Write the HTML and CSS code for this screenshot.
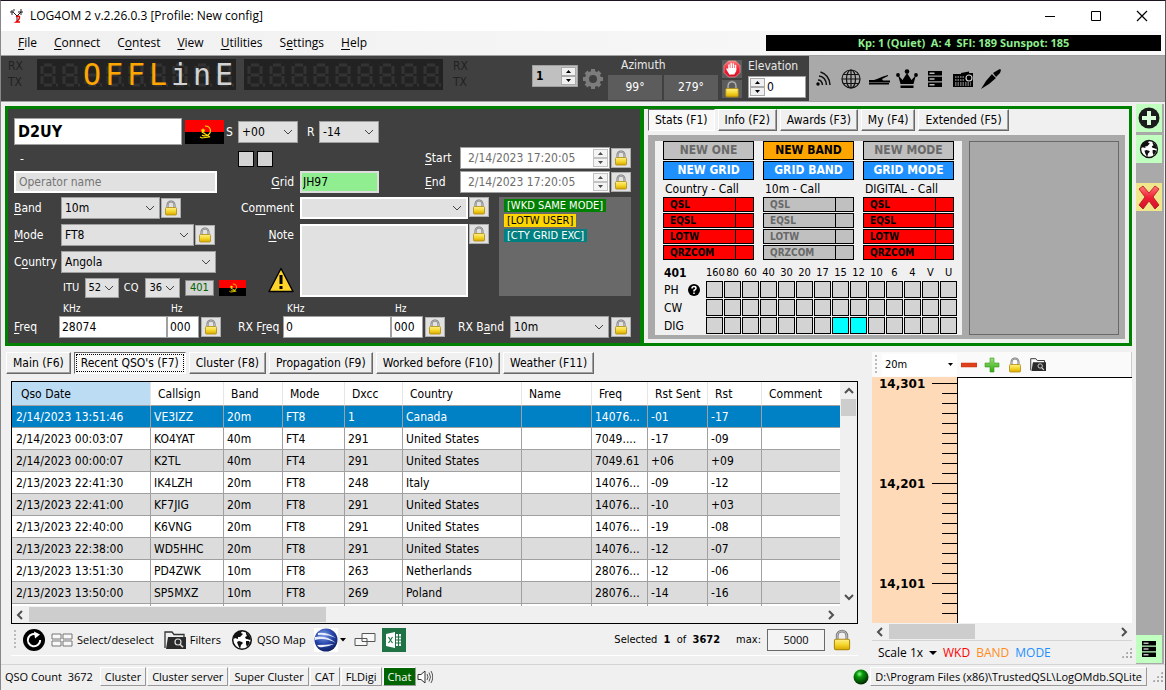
FILE: index.html
```html
<!DOCTYPE html>
<html lang="en">
<head>
    <meta charset="UTF-8">
    <meta name="viewport" content="width=device-width, initial-scale=1.0">
    <title>LOG4OM 2</title>
    <link rel="stylesheet" href="styles.css">
</head>
<body>
    <!-- Shared icons -->
    <svg class="hidden">
        <defs>
            <linearGradient id="gold" x1="0" y1="0" x2="0" y2="1">
                <stop offset="0" stop-color="#fff08a"/><stop offset="0.5" stop-color="#f5d82e"/><stop offset="1" stop-color="#d9a900"/>
            </linearGradient>
            <linearGradient id="redGrad" x1="0" y1="0" x2="0" y2="1">
                <stop offset="0" stop-color="#ff7a7a"/><stop offset="0.5" stop-color="#f02035"/><stop offset="1" stop-color="#d0102a"/>
            </linearGradient>
            <linearGradient id="greenGrad" x1="0" y1="0" x2="0" y2="1">
                <stop offset="0" stop-color="#9be07a"/><stop offset="1" stop-color="#2fa80f"/>
            </linearGradient>
            <radialGradient id="led" cx="0.4" cy="0.3" r="0.7">
                <stop offset="0" stop-color="#8f8"/><stop offset="0.3" stop-color="#0a9a0a"/><stop offset="1" stop-color="#002800"/>
            </radialGradient>
            <radialGradient id="earthGrad" cx="0.4" cy="0.3" r="0.8">
                <stop offset="0" stop-color="#7d9be6"/><stop offset="0.5" stop-color="#2443a8"/><stop offset="1" stop-color="#0a1650"/>
            </radialGradient>
            <pattern id="ghost" width="22" height="31" patternUnits="userSpaceOnUse">
                <g fill="none" stroke="#333" stroke-width="3">
                    <path d="M7 6h8M7 16h8M7 26h8M5 7v8M5 17v8M17 7v8M17 17v8"/>
                    <path d="M19 26h2"/>
                </g>
            </pattern>
        </defs>
        <symbol id="lock" viewBox="0 0 16 16">
            <path d="M4.5 8V5a3.5 3.5 0 0 1 7 0v3" fill="none" stroke="#777" stroke-width="2"/>
            <path d="M4.5 8V5a3.5 3.5 0 0 1 7 0v3" fill="none" stroke="#ccc" stroke-width="0.7"/>
            <rect x="2.5" y="7.5" width="11" height="7.5" rx="1" fill="url(#gold)" stroke="#b08c10" stroke-width="0.8"/>
        </symbol>
        <symbol id="flag" viewBox="0 0 39 24">
            <path d="M0 0h39v12H0z" fill="#f00"/>
            <path d="M0 12h39v12H0z" fill="#000"/>
            <path d="M20 6c6 0 7 6 3 9-2 1.500-5 1-6 0M15 17l2 1 7-1M17 12l8 5" fill="none" stroke="#ffe000" stroke-width="1.200"/>
            <path d="M18 8l.8 1.500 1.700.2-1.200 1.200.3 1.700-1.600-.8-1.500.8.3-1.700-1.300-1.200 1.800-.2z" fill="#ffe000"/>
        </symbol>
        <symbol id="globe" viewBox="0 0 22 22">
            <circle cx="11" cy="11" r="9.300" fill="#fff" stroke="#111" stroke-width="1.500"/>
            <path d="M4 5l4-3 3 0-1 2 2 1-3 3-2 0 0 2-3-1-1 1-1-1zM8 12l3 1 1 1-2 2-1 4-2-4-1-3zM15 3l3 3 2 4-1 1-3-1-1 0-1-2 2-1-1-2zM15 12l3 0 1 2-3 4-1-3z" fill="#111"/>
        </symbol>
        <symbol id="servers" viewBox="0 0 16 18">
            <path d="M1 1h14v4.500H1zM1 6.700h14v4.500H1zM1 12.400h14v4.500H1z" fill="#000"/>
            <path d="M2.500 2.500h5v1.500h-5zM2.500 8.200h5v1.500h-5zM2.500 13.900h5v1.500h-5z" fill="#bbb"/>
        </symbol>
        <symbol id="folder" viewBox="0 0 22 20">
            <path d="M1 18V2h7l2 2.500h10V8" fill="none" stroke="#333" stroke-width="1.300"/>
            <path d="M4 7h18v12H2z" fill="#2b2b2b"/>
            <circle cx="14" cy="12" r="3" fill="none" stroke="#ddd" stroke-width="1.200"/>
            <path d="M16 14.300l3 3" stroke="#ddd" stroke-width="1.600"/>
        </symbol>
    </svg>

    <!-- Title bar -->
    <header class="titlebar">
        <svg width="16" height="16" viewBox="0 0 16 16">
            <path d="M1 4h4M3 2v5M4 4l4 4v5M8 8l4-4M12 1v6M9 4h5M5 1v2" fill="none" stroke="#222"/>
            <path d="M7 9q3-2 3.500 0T7 14h4" fill="none" stroke="#e00" stroke-width="1.500"/>
        </svg>
        <h1>LOG4OM 2 v.2.26.0.3 [Profile: New config]</h1>
        <div class="window-buttons">
            <button type="button" aria-label="Minimize"><svg width="12" height="12"><path d="M1 6.500h10" stroke="#000"/></svg></button>
            <button type="button" aria-label="Maximize"><svg width="12" height="12"><path d="M1.500 1.500h9v9h-9z" fill="none" stroke="#000"/></svg></button>
            <button type="button" aria-label="Close"><svg width="12" height="12"><path d="M1 1l10 10M11 1L1 11" stroke="#000" stroke-width="1.200"/></svg></button>
        </div>
    </header>

    <nav class="menubar">
        <a href="#"><u>F</u>ile</a>
        <a href="#"><u>C</u>onnect</a>
        <a href="#">C<u>o</u>ntest</a>
        <a href="#"><u>V</u>iew</a>
        <a href="#"><u>U</u>tilities</a>
        <a href="#">S<u>e</u>ttings</a>
        <a href="#"><u>H</u>elp</a>
        <div class="solar">Kp: 1 (Quiet)&nbsp; A: 4&nbsp; SFI: 189 Sunspot: 185</div>
    </nav>

    <!-- Radio / rotator bar -->
    <div class="radiobar">
        <div class="radio">
            <div class="rxtx"><span>RX</span><span>TX</span></div>
            <div class="lcd">
                <svg width="199" height="31"><rect width="199" height="31" fill="url(#ghost)"/></svg>
                <div class="lcd-text"><span></span><span></span><span>O</span><span>F</span><span>F</span><span>L</span><span class="dim">i</span><span class="dim">n</span><span class="dim">E</span></div>
            </div>
            <div class="lcd">
                <svg width="199" height="31"><rect width="199" height="31" fill="url(#ghost)"/></svg>
            </div>
            <div class="rxtx right"><span>RX</span><span>TX</span></div>
        </div>
        <div class="rotator">
            <div class="spin grey">
                <input type="text" value="1" aria-label="Rotator">
                <div class="arrows"><button type="button" aria-label="Up"></button><button type="button" aria-label="Down"></button></div>
            </div>
            <svg width="22" height="22" viewBox="0 0 22 22">
                <circle cx="11" cy="11" r="6" fill="none" stroke="#7c7c7c" stroke-width="4"/>
                <path d="M11 1v4M11 17v4M1 11h4M17 11h4M4 4l3 3M15 15l3 3M4 18l3-3M15 7l3-3" stroke="#7c7c7c" stroke-width="4"/>
            </svg>
            <div class="azimuth">
                <span class="bar-label">Azimuth</span>
                <div><button type="button">99°</button><button type="button">279°</button></div>
            </div>
            <div class="rotor-buttons">
                <button type="button" aria-label="Stop">
                    <svg width="18" height="18" viewBox="0 0 18 18">
                        <path d="M5.500 1h7L17 5.500v7L12.500 17h-7L1 12.500v-7z" fill="url(#redGrad)" stroke="#ffb5b5" stroke-width="0.600"/>
                        <path d="M6 9V5M8.200 8.500V3.500M10.400 8.500V4M12.500 9V5.500M4 9l3 5" stroke="#fff" stroke-width="1.500" stroke-linecap="round"/>
                        <path d="M5.300 8h8v3l-2 3.500H7.500L5.300 11z" fill="#fff"/>
                    </svg>
                </button>
                <button type="button" aria-label="Lock"><svg width="18" height="18"><use href="#lock"/></svg></button>
            </div>
            <div class="elevation">
                <label class="bar-label" for="elevation">Elevation</label>
                <div class="spin">
                    <div class="arrows"><button type="button" aria-label="Up"></button><button type="button" aria-label="Down"></button></div>
                    <input type="text" id="elevation" value="0">
                </div>
            </div>
        </div>
        <div class="tools">
            <button type="button" aria-label="Feed"><svg width="22" height="22" viewBox="0 0 22 22"><circle cx="6" cy="16" r="1.700"/><path d="M6 12q4 0 4.500 5M7 8q7 1 7.500 9M8.500 4q9 3 9.500 13" fill="none" stroke="#111" stroke-width="1.500"/></svg></button>
            <button type="button" aria-label="Web"><svg width="22" height="22" viewBox="0 0 22 22"><g fill="none" stroke="#111" stroke-width="1.200"><circle cx="11" cy="11" r="9"/><ellipse cx="11" cy="11" rx="4.500" ry="9"/><path d="M11 2v18M2 11h18M3.500 6.500h15M3.500 15.500h15"/></g></svg></button>
            <button type="button" aria-label="Key"><svg width="22" height="22" viewBox="0 0 22 22"><path d="M1 12h5l3-1 6-2.500 5-1.500v1l-6 3 1 1.500h7v2H1z"/><path d="M1 15h20v1.500H1z"/></svg></button>
            <button type="button" aria-label="Awards"><svg width="22" height="22" viewBox="0 0 22 22"><path d="M2 7l4.500 5 4.500-7 4.500 7L20 7l-2.500 9h-13zM4.500 17.500h13V20h-13z"/><circle cx="2" cy="7" r="1.900"/><circle cx="20" cy="7" r="1.900"/><circle cx="11" cy="3.500" r="2.300"/></svg></button>
            <button type="button" aria-label="Servers"><svg width="16" height="18"><use href="#servers"/></svg></button>
            <button type="button" aria-label="Radio"><svg width="22" height="22" viewBox="0 0 22 22"><path d="M9 5l8-1.500v1.500h4V19H1V6h8z"/><circle cx="17" cy="10" r="3" fill="none" stroke="#ccc" stroke-width="1.200"/><path d="M3 9h9M3 12h10M3 15h16M3 17h16" stroke="#ccc" stroke-width="1" stroke-dasharray="1.500 1"/></svg></button>
            <button type="button" aria-label="Microphone"><svg width="22" height="22" viewBox="0 0 22 22"><path d="M1 21l5-8 6-7 4 4-7 6zM13 5l5-3 2-1 1 1-1 3-4 4z"/><path d="M12 6l4 4" stroke="#777"/></svg></button>
        </div>
    </div>

    <div class="main">
        <div class="work">
            <div class="upper">
                <!-- QSO entry form -->
                <form class="entry">
                    <div class="call-row">
                        <input type="text" class="call" value="D2UY" aria-label="Callsign">
                        <svg class="flag" width="39" height="24"><use href="#flag"/></svg>
                        <label for="rstSent">S</label>
                        <select id="rstSent" class="w-rst"><option>+00</option></select>
                        <label for="rstRcvd" class="rcvd">R</label>
                        <select id="rstRcvd" class="w-rst"><option>-14</option></select>
                    </div>

                    <div class="block-a">
                        <div class="operator">
                            <span class="dash">-</span>
                            <input type="text" placeholder="Operator name" aria-label="Operator name">
                        </div>
                        <div class="grid-col">
                            <div class="squares"><i></i><i></i></div>
                            <div class="field"><label for="grid"><u>G</u>rid</label><input type="text" id="grid" value="JH97"></div>
                        </div>
                        <div class="dates">
                            <label for="start"><u>S</u>tart</label>
                            <div class="spin date">
                                <input type="text" id="start" value="2/14/2023 17:20:05">
                                <div class="arrows"><button type="button" aria-label="Up"></button><button type="button" aria-label="Down"></button></div>
                            </div>
                            <button type="button" class="lock" aria-label="Lock start"><svg width="16" height="16"><use href="#lock"/></svg></button>
                            <label for="end"><u>E</u>nd</label>
                            <div class="spin date">
                                <input type="text" id="end" value="2/14/2023 17:20:05">
                                <div class="arrows"><button type="button" aria-label="Up"></button><button type="button" aria-label="Down"></button></div>
                            </div>
                            <button type="button" class="lock" aria-label="Lock end"><svg width="16" height="16"><use href="#lock"/></svg></button>
                        </div>
                    </div>

                    <div class="block-b">
                        <div class="rows">
                            <div class="field">
                                <label for="band"><u>B</u>and</label>
                                <select id="band" class="w-band"><option>10m</option></select>
                                <button type="button" class="lock" aria-label="Lock band"><svg width="16" height="16"><use href="#lock"/></svg></button>
                            </div>
                            <div class="field">
                                <label for="mode"><u>M</u>ode</label>
                                <select id="mode" class="w-mode"><option>FT8</option></select>
                                <button type="button" class="lock" aria-label="Lock mode"><svg width="16" height="16"><use href="#lock"/></svg></button>
                            </div>
                            <div class="field">
                                <label for="country">C<u>o</u>untry</label>
                                <select id="country" class="w-country"><option>Angola</option></select>
                            </div>
                            <div class="zones">
                                <label for="itu">ITU</label>
                                <select id="itu"><option>52</option></select>
                                <label for="cq">CQ</label>
                                <select id="cq"><option>36</option></select>
                                <span class="dxcc">401</span>
                                <svg width="27" height="16" viewBox="0 0 39 24" preserveAspectRatio="none"><use href="#flag"/></svg>
                            </div>
                        </div>
                        <div class="notes">
                            <label for="comment">Co<u>m</u>ment</label>
                            <select id="comment" class="comment"><option></option></select>
                            <button type="button" class="lock" aria-label="Lock comment"><svg width="16" height="16"><use href="#lock"/></svg></button>
                            <div class="note-label">
                                <label for="note"><u>N</u>ote</label>
                                <svg width="26" height="26" viewBox="0 0 26 26">
                                    <path d="M13 1.500L25 24.500H1z" fill="#ffd42a" stroke="#000" stroke-width="1.400" stroke-linejoin="round"/>
                                    <path d="M13 8v9M13 19v3" stroke="#000" stroke-width="3"/>
                                </svg>
                            </div>
                            <textarea id="note"></textarea>
                            <button type="button" class="lock" aria-label="Lock note"><svg width="16" height="16"><use href="#lock"/></svg></button>
                        </div>
                        <div class="tags">
                            <span class="tag green">[WKD SAME MODE]</span>
                            <span class="tag yellow">[LOTW USER]</span>
                            <span class="tag teal">[CTY GRID EXC]</span>
                        </div>
                    </div>

                    <div class="freq-row">
                        <label class="name" for="freq"><u>F</u>req</label>
                        <div class="unit khz"><label for="freq">KHz</label><input type="text" id="freq" value="28074"></div>
                        <div class="unit hz"><label for="hz">Hz</label><input type="text" id="hz" value="000"></div>
                        <button type="button" class="lock" aria-label="Lock frequency"><svg width="16" height="16"><use href="#lock"/></svg></button>
                        <label class="name rx" for="rxFreq">RX F<u>r</u>eq</label>
                        <div class="unit khz"><label for="rxFreq">KHz</label><input type="text" id="rxFreq" value="0"></div>
                        <div class="unit hz"><label for="rxHz">Hz</label><input type="text" id="rxHz" value="000"></div>
                        <button type="button" class="lock" aria-label="Lock RX frequency"><svg width="16" height="16"><use href="#lock"/></svg></button>
                        <label class="name rxband" for="rxBand">RX B<u>a</u>nd</label>
                        <select id="rxBand" class="w-band"><option>10m</option></select>
                        <button type="button" class="lock" aria-label="Lock RX band"><svg width="16" height="16"><use href="#lock"/></svg></button>
                    </div>
                </form>

                <!-- Stats -->
                <div class="stats">
                    <div class="tabs">
                        <button type="button" class="tab active">Stats (F1)</button>
                        <button type="button" class="tab">Info (F2)</button>
                        <button type="button" class="tab">Awards (F3)</button>
                        <button type="button" class="tab">My (F4)</button>
                        <button type="button" class="tab">Extended (F5)</button>
                    </div>
                    <div class="stats-body">
                        <div class="stats-data">
                            <div class="stat-cols">
                                <div class="stat-col red">
                                    <b class="badge">NEW ONE</b>
                                    <b class="badge blue">NEW GRID</b>
                                    <span>Country - Call</span>
                                    <div class="qsl">QSL</div><div class="qsl">EQSL</div><div class="qsl">LOTW</div><div class="qsl">QRZCOM</div>
                                </div>
                                <div class="stat-col">
                                    <b class="badge orange">NEW BAND</b>
                                    <b class="badge blue">GRID BAND</b>
                                    <span>10m - Call</span>
                                    <div class="qsl">QSL</div><div class="qsl">EQSL</div><div class="qsl">LOTW</div><div class="qsl">QRZCOM</div>
                                </div>
                                <div class="stat-col red">
                                    <b class="badge">NEW MODE</b>
                                    <b class="badge blue">GRID MODE</b>
                                    <span>DIGITAL - Call</span>
                                    <div class="qsl">QSL</div><div class="qsl">EQSL</div><div class="qsl">LOTW</div><div class="qsl">QRZCOM</div>
                                </div>
                            </div>
                            <table class="bands">
                                <tr><th class="row-name"><b>401</b></th><th>160</th><th>80</th><th>60</th><th>40</th><th>30</th><th>20</th><th>17</th><th>15</th><th>12</th><th>10</th><th>6</th><th>4</th><th>V</th><th>U</th></tr>
                                <tr><th class="row-name"><div>PH <svg width="12" height="12" viewBox="0 0 12 12"><circle cx="6" cy="6" r="6"/><path d="M4 4.500q0-2 2-2t2 1.700q0 1-2 2.300v1M6 8.500v1.500" fill="none" stroke="#fff" stroke-width="1.500"/></svg></div></th><td></td><td></td><td></td><td></td><td></td><td></td><td></td><td></td><td></td><td></td><td></td><td></td><td></td><td></td></tr>
                                <tr><th class="row-name">CW</th><td></td><td></td><td></td><td></td><td></td><td></td><td></td><td></td><td></td><td></td><td></td><td></td><td></td><td></td></tr>
                                <tr><th class="row-name">DIG</th><td></td><td></td><td></td><td></td><td></td><td></td><td></td><td class="worked"></td><td class="worked"></td><td></td><td></td><td></td><td></td><td></td></tr>
                            </table>
                        </div>
                        <div class="photo"></div>
                    </div>
                </div>
            </div>

            <div class="lower">
                <!-- Log -->
                <div class="log">
                    <div class="tabs">
                        <button type="button" class="tab">Main (F6)</button>
                        <button type="button" class="tab active focus">Recent QSO's (F7)</button>
                        <button type="button" class="tab">Cluster (F8)</button>
                        <button type="button" class="tab">Propagation (F9)</button>
                        <button type="button" class="tab">Worked before (F10)</button>
                        <button type="button" class="tab">Weather (F11)</button>
                    </div>
                    <div class="log-box">
                        <div class="log-view">
                            <div class="log-table">
                                <table>
                                    <colgroup><col class="c-date"><col class="c-call"><col class="c-band"><col class="c-mode"><col class="c-dxcc"><col class="c-country"><col class="c-name"><col class="c-freq"><col class="c-sent"><col class="c-rst"><col></colgroup>
                                    <thead>
                                        <tr><th class="sorted">Qso Date</th><th>Callsign</th><th>Band</th><th>Mode</th><th>Dxcc</th><th>Country</th><th>Name</th><th>Freq</th><th>Rst Sent</th><th>Rst</th><th>Comment</th></tr>
                                    </thead>
                                    <tbody>
                                        <tr class="selected"><td>2/14/2023 13:51:46</td><td>VE3IZZ</td><td>20m</td><td>FT8</td><td>1</td><td>Canada</td><td></td><td>14076...</td><td>-01</td><td>-17</td><td></td></tr>
                                        <tr><td>2/14/2023 00:03:07</td><td>KO4YAT</td><td>40m</td><td>FT4</td><td>291</td><td>United States</td><td></td><td>7049....</td><td>-17</td><td>-09</td><td></td></tr>
                                        <tr><td>2/14/2023 00:00:07</td><td>K2TL</td><td>40m</td><td>FT4</td><td>291</td><td>United States</td><td></td><td>7049.61</td><td>+06</td><td>+09</td><td></td></tr>
                                        <tr><td>2/13/2023 22:41:30</td><td>IK4LZH</td><td>20m</td><td>FT8</td><td>248</td><td>Italy</td><td></td><td>14076...</td><td>-09</td><td>-12</td><td></td></tr>
                                        <tr><td>2/13/2023 22:41:00</td><td>KF7JIG</td><td>20m</td><td>FT8</td><td>291</td><td>United States</td><td></td><td>14076...</td><td>-10</td><td>+03</td><td></td></tr>
                                        <tr><td>2/13/2023 22:40:00</td><td>K6VNG</td><td>20m</td><td>FT8</td><td>291</td><td>United States</td><td></td><td>14076...</td><td>-19</td><td>-08</td><td></td></tr>
                                        <tr><td>2/13/2023 22:38:00</td><td>WD5HHC</td><td>20m</td><td>FT8</td><td>291</td><td>United States</td><td></td><td>14076...</td><td>-12</td><td>-07</td><td></td></tr>
                                        <tr><td>2/13/2023 13:51:30</td><td>PD4ZWK</td><td>10m</td><td>FT8</td><td>263</td><td>Netherlands</td><td></td><td>28076...</td><td>-12</td><td>-06</td><td></td></tr>
                                        <tr><td>2/13/2023 13:50:00</td><td>SP5MXZ</td><td>10m</td><td>FT8</td><td>269</td><td>Poland</td><td></td><td>28076...</td><td>-14</td><td>-16</td><td></td></tr>
                                        <tr><td></td><td></td><td></td><td></td><td></td><td></td><td></td><td></td><td></td><td></td><td></td></tr>
                                    </tbody>
                                </table>
                            </div>
                            <div class="vscroll">
                                <svg width="10" height="8"><path d="M1 6l4-4 4 4" fill="none" stroke="#505050" stroke-width="2"/></svg>
                                <i></i>
                                <svg width="10" height="8"><path d="M1 2l4 4 4-4" fill="none" stroke="#505050" stroke-width="2"/></svg>
                            </div>
                        </div>
                        <div class="hscroll">
                            <svg width="8" height="10"><path d="M6 1L2 5l4 4" fill="none" stroke="#505050" stroke-width="2"/></svg>
                            <i></i>
                            <svg width="8" height="10"><path d="M2 1l4 4-4 4" fill="none" stroke="#505050" stroke-width="2"/></svg>
                        </div>
                    </div>
                    <div class="log-tools">
                        <i class="grip"></i>
                        <button type="button" aria-label="Refresh"><svg width="22" height="22" viewBox="0 0 22 22"><circle cx="11" cy="11" r="11"/><path d="M14.500 6A6.200 6.200 0 1 0 17.200 11" fill="none" stroke="#fff" stroke-width="2"/><path d="M11 2.500l6 3-5 4z" fill="#fff"/></svg></button>
                        <button type="button"><svg width="22" height="14" viewBox="0 0 22 14"><path d="M1 1h9v5H1zM12 1h9v5h-9zM1 8h9v5H1zM12 8h9v5h-9z" fill="#f8f8f8" stroke="#777"/></svg>Select/deselect</button>
                        <button type="button" class="filters"><svg width="22" height="20"><use href="#folder"/></svg>Filters</button>
                        <button type="button" class="qsomap"><svg width="22" height="22"><use href="#globe"/></svg>QSO Map</button>
                        <button type="button" class="earth" aria-label="Google Earth">
                            <svg width="24" height="24" viewBox="0 0 24 24"><path d="M0 0h24v24H0z" fill="#fff"/><circle cx="12" cy="12" r="11.500" fill="url(#earthGrad)"/><path d="M1 9q11-2 21 6-11-6-21-3zM3 17q9 0 17-1-8 4-15 3zM4 5q9-1 18 5-9-4-18-3z" fill="#e8eefc"/></svg>
                            <svg width="6" height="4"><path d="M0 0h6L3 3.500z"/></svg>
                        </button>
                        <button type="button" class="cascade" aria-label="Windows"><svg width="22" height="16" viewBox="0 0 22 16"><path d="M8 1.500h13v8H8zM1 6.500h12v7H1z" fill="#f8f8f8" stroke="#555"/></svg></button>
                        <button type="button" aria-label="Export to Excel"><svg width="24" height="24" viewBox="0 0 24 24"><path d="M0 0h24v24H0z" fill="#1f7244"/><path d="M4 6l9-2v16l-9-2zM14 6h5v12h-5z" fill="#fff"/><path d="M6.500 9l4 6M10.500 9l-4 6M14 9h5M14 12h5M14 15h5M16.500 6v12" stroke="#1f7244" stroke-width="1.200"/></svg></button>
                        <span class="count">Selected&nbsp; <b>1</b>&nbsp; of&nbsp; <b>3672</b></span>
                        <label for="max">max:</label>
                        <input type="text" id="max" value="5000">
                        <button type="button" aria-label="Lock list"><svg width="22" height="22"><use href="#lock"/></svg></button>
                    </div>
                </div>

                <!-- Band map -->
                <div class="bandmap">
                    <div class="band-tools">
                        <i class="grip"></i>
                        <select aria-label="Band map band"><option>20m</option></select>
                        <button type="button" aria-label="Zoom out"><svg width="16" height="16"><path d="M0 6h16v4H0z" fill="#e0401a" stroke="#c03010" stroke-width="0.500"/></svg></button>
                        <button type="button" aria-label="Zoom in"><svg width="16" height="16"><path d="M6 1h4v5h5v4h-5v5H6v-5H1V6h5z" fill="url(#greenGrad)" stroke="#3a9a20" stroke-width="0.600"/></svg></button>
                        <button type="button" aria-label="Lock band map"><svg width="16" height="16"><use href="#lock"/></svg></button>
                        <button type="button" aria-label="Search"><svg width="16" height="15"><use href="#folder"/></svg></button>
                    </div>
                    <div class="map">
                        <ul class="scale"><li>14,301</li><li>14,201</li><li>14,101</li></ul>
                        <div class="spots"></div>
                    </div>
                    <div class="hscroll small">
                        <svg width="8" height="10"><path d="M6 1L2 5l4 4" fill="none" stroke="#505050" stroke-width="2"/></svg>
                        <i></i>
                        <svg width="8" height="10"><path d="M2 1l4 4-4 4" fill="none" stroke="#505050" stroke-width="2"/></svg>
                    </div>
                    <div class="legend">
                        <button type="button">Scale 1x <svg width="8" height="4"><path d="M0 0h8L4 4z"/></svg></button>
                        <span class="wkd">WKD</span><span class="bnd">BAND</span><span class="mde">MODE</span>
                        <i class="resize"></i>
                    </div>
                </div>
            </div>
        </div>

        <!-- Side buttons -->
        <aside class="side">
            <button type="button" aria-label="Add QSO"><svg width="22" height="22" viewBox="0 0 22 22"><circle cx="11" cy="11" r="10.500" fill="#1c1c1c"/><path d="M11 4v14M4 11h14" stroke="#d8ffd8" stroke-width="4"/></svg></button>
            <button type="button" aria-label="World map"><svg width="20" height="20"><use href="#globe"/></svg></button>
            <button type="button" class="clear" aria-label="Clear"><svg width="24" height="26" viewBox="0 0 24 26"><path d="M2 5l4-3 6 7 6-7 4 3-6 8 6 8-4 4-6-8-6 8-4-4 6-8z" fill="url(#redGrad)" stroke="#b01020" stroke-width="0.800"/></svg></button>
            <button type="button" class="last" aria-label="Servers"><svg width="16" height="18"><use href="#servers"/></svg></button>
        </aside>
    </div>

    <footer class="status">
        <span class="qso-count">QSO Count&nbsp; 3672</span>
        <button type="button">Cluster</button>
        <button type="button">Cluster server</button>
        <button type="button">Super Cluster</button>
        <button type="button">CAT</button>
        <button type="button">FLDigi</button>
        <button type="button" class="chat">Chat</button>
        <svg width="16" height="14" viewBox="0 0 16 14"><path d="M1 4.500h3l4-3.500v12L4 9.500H1z" fill="#fff" stroke="#333"/><path d="M10 4q2 3 0 6M12 2.500q3 4.500 0 9M14 1q3.500 6 0 12" fill="none" stroke="#444" stroke-width="0.900"/></svg>
        <svg class="led" width="16" height="16"><circle cx="8" cy="8" r="7.500" fill="url(#led)"/></svg>
        <button type="button">D:\Program Files (x86)\TrustedQSL\LogOMdb.SQLite</button>
        <i class="resize"></i>
    </footer>
</body>
</html>
```
FILE: styles.css
```css
* {
    margin: 0;
    padding: 0;
    box-sizing: border-box;
}

body {
    font-family: Tahoma, "DejaVu Sans Condensed", "Noto Sans", sans-serif;
    font-size: 12px;
    line-height: 14px;
    color: #000;
    background: #f0f0f0;
    display: flex;
    flex-direction: column;
    height: 100vh;
    overflow: hidden;
    border-top: 1px solid #1b1420;
    border-left: 1px solid #888;
    border-right: 1px solid #555;
}

svg {
    display: block;
    flex: none;
}

button, input, select, textarea {
    font: inherit;
    color: inherit;
    border: none;
    border-radius: 0;
    outline: none;
}

button {
    background: none;
    white-space: nowrap;
}

a {
    color: inherit;
    text-decoration: none;
}

u {
    text-underline-offset: 2px;
}

.hidden {
    position: absolute;
    width: 0;
    height: 0;
}

/* Title and menu */
.titlebar {
    display: flex;
    align-items: center;
    gap: 5px;
    height: 30px;
    padding-left: 8px;
    background: #fff;
    font-family: "Segoe UI", "Open Sans", sans-serif;
}

.titlebar h1 {
    flex: 1;
    font-size: 12px;
    font-weight: normal;
}

.window-buttons button {
    width: 46px;
    height: 30px;
}

.window-buttons {
    display: flex;
}

.window-buttons svg {
    margin: auto;
}

.menubar {
    display: flex;
    align-items: center;
    gap: 17px;
    height: 24px;
    padding: 0 4px 0 17px;
    background: linear-gradient(90deg, #f0f0f0, #fafafa);
    font-family: "Segoe UI", "Open Sans", sans-serif;
}

.solar {
    width: 395px;
    margin-left: auto;
    background: #000;
    color: #90ee90;
    font-weight: bold;
    font-size: 11px;
    line-height: 16px;
    text-align: center;
}

/* Radio bar */
.radiobar {
    display: flex;
    height: 47px;
    border-top: 1px solid #a0a0a0;
    border-bottom: 1px solid #a0a0a0;
    background: #a9a9a9;
}

.radio {
    display: flex;
    gap: 8px;
    padding: 3px 0 0 7px;
    background: #404040;
}

.rxtx {
    display: flex;
    flex-direction: column;
    gap: 2px;
    width: 21px;
    color: #222;
}

.rxtx.right {
    padding-left: 2px;
}

.lcd {
    position: relative;
    width: 199px;
    height: 31px;
    background: #222;
}

.lcd-text {
    position: absolute;
    inset: 0;
    display: grid;
    grid-template-columns: repeat(9, 22px);
    color: #ffa500;
    font-family: "DejaVu Sans Mono", monospace;
    font-size: 30px;
    line-height: 32px;
    text-align: center;
}

.lcd-text .dim {
    color: #d3d3d3;
}

.rotator {
    display: flex;
    align-items: center;
    gap: 4px;
    padding-left: 60px;
    padding-right: 3px;
    background: #404040;
}

.spin {
    display: flex;
    width: 58px;
    height: 22px;
    padding: 1px;
    background: #fff;
    border: 1px solid #a0a0a0;
}

.spin input {
    flex: 1;
    min-width: 0;
    padding-left: 2px;
    background: none;
}

.spin.grey {
    width: 46px;
    margin-bottom: 6px;
    background: #c0c0c0;
    font-weight: bold;
}

.arrows {
    display: flex;
    flex-direction: column;
    width: 15px;
}

.arrows button {
    flex: 1;
    min-height: 0;
    border: 1px solid #aaa;
    background: #f0f0f0 url("data:image/svg+xml,%3Csvg xmlns='http://www.w3.org/2000/svg' width='5' height='3'%3E%3Cpath d='M0 3h5L2.500 0z'/%3E%3C/svg%3E") center no-repeat;
}

.arrows button + button {
    background-image: url("data:image/svg+xml,%3Csvg xmlns='http://www.w3.org/2000/svg' width='5' height='3'%3E%3Cpath d='M0 0h5L2.500 3z'/%3E%3C/svg%3E");
}

.bar-label {
    display: block;
    color: #e8e8e8;
    margin-bottom: 3px;
}

.azimuth .bar-label {
    padding-left: 13px;
}

.azimuth div {
    display: flex;
    gap: 2px;
}

.azimuth button {
    width: 54px;
    height: 25px;
    background: #5c5c5c;
    color: #fff;
}

.rotor-buttons {
    display: flex;
    flex-direction: column;
    gap: 2px;
}

.rotor-buttons button {
    padding: 0 1px;
    background: #5c5c5c;
}

.elevation {
    padding-left: 2px;
}

.tools {
    display: flex;
    align-items: center;
    gap: 6px;
    padding-left: 3px;
}

.tools button {
    width: 22px;
}

.tools svg {
    margin: auto;
}

/* Main area */
.main {
    flex: 1;
    min-height: 0;
    display: flex;
    gap: 4px;
    padding-right: 1px;
}

.work {
    flex: 1;
    min-width: 0;
    padding: 4px 0 0 4px;
    display: flex;
    flex-direction: column;
}

.upper {
    display: flex;
    border: 3px solid #008000;
}

.entry {
    flex: none;
    width: 636px;
    padding: 9px 9px 5px 6px;
    border-right: 4px solid #008000;
    background: #404040;
    color: #fff;
}

.entry input, .entry select, .entry textarea {
    height: 22px;
    border: 1px solid #a0a0a0;
    background-color: #e1e1e1;
    color: #000;
}

.entry select, .band-tools select {
    appearance: none;
    padding-left: 3px;
    background-image: url("data:image/svg+xml,%3Csvg xmlns='http://www.w3.org/2000/svg' width='10' height='6'%3E%3Cpath d='M1 1l4 4 4-4' fill='none' stroke='%23444'/%3E%3C/svg%3E");
    background-repeat: no-repeat;
    background-position: right 4px center;
}

.lock {
    display: flex;
    align-items: center;
    justify-content: center;
    width: 20px;
    height: 20px;
    border: 1px solid #adadad;
    background: #e1e1e1;
}

.call-row {
    display: flex;
    align-items: center;
    height: 27px;
}

.call-row .call {
    width: 168px;
    height: 27px;
    padding-left: 3px;
    background: #fff;
    font-size: 16px;
    font-weight: bold;
}

.flag {
    margin: 0 2px 0 3px;
}

.call-row label {
    width: 12px;
}

.call-row .rcvd {
    margin-left: 9px;
}

.w-rst {
    width: 60px;
}

.block-a {
    display: flex;
    margin-top: 2px;
}

.operator {
    width: 203px;
    display: flex;
    flex-direction: column;
    justify-content: space-between;
}

.operator .dash {
    padding: 5px 6px;
}

.entry .operator input {
    padding-left: 3px;
    border: 2px solid #fff;
}

.grid-col {
    width: 162px;
    display: flex;
    flex-direction: column;
    align-items: flex-end;
    justify-content: space-between;
}

.squares {
    display: flex;
    gap: 3px;
    width: 141px;
    padding-top: 4px;
}

.squares i {
    width: 16px;
    height: 16px;
    border: 1px solid #000;
    background: #d3d3d3;
}

.entry .grid-col input {
    width: 79px;
    padding-left: 1px;
    border: 2px solid #ddd;
    background: #90ee90;
}

.grid-col .field {
    gap: 6px;
}

.dates {
    display: grid;
    grid-template-columns: 34px 150px 20px;
    gap: 1px;
    align-items: center;
    margin-left: auto;
}

.date {
    width: 150px;
}

.entry .date input {
    height: 18px;
    padding-left: 6px;
    border: none;
    background: #fff;
    color: #6d6d6d;
}

.date .arrows {
    opacity: 0.7;
}

.block-b {
    display: flex;
    margin-top: 4px;
}

.rows {
    display: flex;
    flex-direction: column;
    gap: 5px;
    width: 232px;
}

.field {
    display: flex;
    align-items: center;
    gap: 1px;
}

.rows .field label {
    width: 46px;
}

.w-band {
    width: 99px;
}

.w-mode {
    width: 133px;
}

.w-country {
    width: 155px;
}

.zones {
    display: flex;
    align-items: center;
    gap: 5px;
    padding-left: 49px;
    font-size: 11px;
}

.zones select {
    width: 35px;
    height: 20px;
}

.zones label {
    width: 17px;
}

.dxcc {
    width: 30px;
    line-height: 14px;
    text-align: center;
    border: 1px solid #888;
    background: #d3d3d3;
    color: #006400;
}

.notes {
    display: grid;
    grid-template-columns: 53px 168px 20px;
    grid-template-rows: 22px 73px;
    gap: 5px 1px;
    text-align: right;
}

.notes > label {
    padding-top: 4px;
    margin-right: 5px;
    margin-left: -8px;
}

.notes .comment {
    border: 2px solid #fff;
    background-color: #e1e1e1;
}

.note-label {
    display: flex;
    flex-direction: column;
    align-items: flex-end;
    justify-content: space-between;
    padding: 4px 5px 4px 0;
}

.notes textarea {
    height: 73px;
    resize: none;
    border: 2px solid #fff;
}

.tags {
    width: 132px;
    height: 99px;
    margin-left: auto;
    padding: 2px 5px;
    background: #696969;
    display: flex;
    flex-direction: column;
    align-items: flex-start;
    gap: 2px;
    font-size: 11px;
    line-height: 13px;
}

.tag {
    padding: 0 3px;
}

.tag.green {
    background: #008000;
}

.tag.yellow {
    background: #ffd700;
    color: #000;
}

.tag.teal {
    background: #008080;
}

.freq-row {
    display: flex;
    align-items: flex-end;
    margin-top: 5px;
}

.freq-row .name {
    width: 45px;
    padding-bottom: 4px;
    white-space: nowrap;
}

.freq-row .rx {
    width: 45px;
    margin-left: 17px;
}

.freq-row .rxband {
    width: 52px;
    margin-left: 13px;
}

.freq-row .lock {
    margin: 0 0 1px 2px;
}

.unit {
    display: flex;
    flex-direction: column;
    gap: 1px;
}

.unit label {
    padding-left: 4px;
    font-size: 10px;
    line-height: 12px;
}

.entry .unit input {
    width: 32px;
    padding-left: 2px;
    background: #fff;
}

.entry .khz input {
    width: 108px;
}

/* Tabs */
.tabs {
    display: flex;
    gap: 3px;
}

.tab {
    height: 22px;
    padding: 0 6px;
    border: 1px solid;
    border-color: #fff #696969 #696969 #fff;
    box-shadow: inset -1px -1px #a0a0a0;
    background: #f0f0f0;
}

.tab.active {
    border-color: #696969 #fff #fff #696969;
    box-shadow: none;
    background: #f8f8f8;
}

.tab.focus {
    outline: 1px dotted #000;
    outline-offset: -3px;
}

/* Stats */
.stats {
    flex: 1;
    min-width: 0;
    padding: 0 4px 4px;
    display: flex;
    flex-direction: column;
    gap: 4px;
}

.stats-body {
    flex: 1;
    display: flex;
    gap: 7px;
    padding: 6px 6px 4px 7px;
    background: #a9a9a9;
}

.stats-data {
    width: 307px;
    padding: 0 3px 0 8px;
    background: #f0f0f0;
}

.photo {
    flex: 1;
    border: 1px solid #696969;
}

.stat-cols {
    display: flex;
    gap: 9px;
}

.stat-col {
    width: 91px;
    display: flex;
    flex-direction: column;
    gap: 1px;
}

.stat-col span {
    padding: 2px 2px 0;
    line-height: 13px;
    white-space: nowrap;
}

.badge {
    border: 1px solid #000;
    background: #c0c0c0;
    color: #696969;
    line-height: 17px;
    text-align: center;
}

.badge.orange {
    background: #ffa500;
    color: #000;
}

.badge.blue {
    background: #1e90ff;
    color: #fff;
}

.qsl {
    padding-left: 6px;
    border: 1px solid #000;
    background: linear-gradient(#000, #000) 71px 0 / 1px 100% no-repeat #c0c0c0;
    color: #696969;
    font-size: 10px;
    font-weight: bold;
    line-height: 13px;
}

.red .qsl {
    background-color: #f00;
    color: #000;
}

.bands {
    margin-top: 4px;
    table-layout: fixed;
    border-spacing: 1px 1px;
    width: 295px;
}

.bands th {
    font-size: 11px;
    font-weight: normal;
    height: 15px;
}

.bands .row-name {
    width: 41px;
    font-size: 12px;
    text-align: left;
}

.row-name div {
    display: flex;
    align-items: center;
    justify-content: space-between;
    padding-right: 5px;
}

.bands td {
    height: 17px;
    border: 1px solid #000;
    background: #d3d3d3;
}

.bands .worked {
    background: #0ff;
}

/* Log */
.lower {
    flex: 1;
    min-height: 0;
    display: flex;
    gap: 14px;
    padding-top: 6px;
}

.log {
    flex: 1;
    min-width: 0;
    display: flex;
    flex-direction: column;
    padding-bottom: 8px;
}

.log .tabs {
    padding-left: 1px;
}

.log-box {
    flex: 1;
    min-height: 0;
    margin: 7px 0 0 6px;
    border: 1px solid #000;
    display: flex;
    flex-direction: column;
}

.log-view {
    flex: 1;
    min-height: 0;
    display: flex;
}

.log-table {
    flex: 1;
    min-width: 0;
    overflow: hidden;
    background: #fff;
}

.log-table table {
    width: 100%;
    table-layout: fixed;
    border-collapse: separate;
    border-spacing: 0;
}

.log-table th {
    height: 24px;
    padding-left: 7px;
    border-right: 1px solid #e5e5e5;
    border-bottom: 1px solid #a0a0a0;
    font-weight: normal;
    text-align: left;
    white-space: nowrap;
}

.log-table .sorted {
    background: #bcdcf4;
}

.log-table td {
    height: 22px;
    padding-left: 3px;
    border-right: 1px solid #a0a0a0;
    border-bottom: 1px solid #a0a0a0;
    white-space: nowrap;
}

.log-table tr > :last-child {
    border-right: none;
}

.log-table tr > :first-child {
    padding-left: 4px;
}

.log-table tr > .sorted {
    padding-left: 9px;
}

.log-table tbody tr:nth-child(odd) {
    background: #dcdcdc;
}

.log-table tbody .selected:nth-child(odd) {
    background: #0080c5;
    color: #fff;
}

.c-date { width: 139px; }
.c-call { width: 73px; }
.c-band { width: 59px; }
.c-mode { width: 62px; }
.c-dxcc { width: 58px; }
.c-country { width: 119px; }
.c-name { width: 70px; }
.c-freq { width: 56px; }
.c-sent { width: 60px; }
.c-rst { width: 54px; }

.vscroll {
    display: flex;
    flex-direction: column;
    align-items: center;
    width: 17px;
    padding: 5px 0;
}

.vscroll i {
    width: 15px;
    height: 17px;
    margin: 4px 0 auto;
    background: #cdcdcd;
}

.hscroll {
    display: flex;
    align-items: center;
    height: 17px;
    padding: 0 22px 0 4px;
}

.hscroll i {
    width: 297px;
    height: 15px;
    margin: 0 auto 0 5px;
    background: #cdcdcd;
}

.log-tools {
    display: flex;
    align-items: center;
    gap: 6px;
    height: 32px;
    margin-left: 6px;
    padding: 0 5px 0 3px;
    border-bottom: 1px solid #fff;
    font-family: "Segoe UI", "Open Sans", sans-serif;
    font-size: 11px;
}

.log-tools button {
    display: flex;
    align-items: center;
    gap: 4px;
}

.log-tools .filters, .log-tools .qsomap {
    margin-left: 4px;
}

.log-tools .earth {
    gap: 2px;
    margin-left: 2px;
}

.log-tools .cascade {
    margin-left: 2px;
}

.grip {
    width: 2px;
    height: 20px;
    margin-right: 1px;
    background: repeating-linear-gradient(#bbb 0 2px, transparent 2px 4px);
}

.count {
    margin-left: auto;
    margin-right: 10px;
    font-family: Tahoma, "DejaVu Sans Condensed", sans-serif;
}

.log-tools label {
    font-family: Tahoma, "DejaVu Sans Condensed", sans-serif;
}

.log-tools input {
    width: 58px;
    height: 22px;
    border: 1px solid #696969;
    background: #f4f4f4;
    text-align: center;
}

/* Band map */
.bandmap {
    width: 260px;
    flex: none;
    display: flex;
    flex-direction: column;
}

.band-tools {
    display: flex;
    align-items: center;
    gap: 7px;
    height: 25px;
    padding-left: 3px;
    background: #fafafa;
    border-right: 1px solid #ccc;
}

.band-tools select {
    width: 75px;
    height: 22px;
    margin-left: -3px;
    margin-right: -3px;
    background-color: #fff;
    background-image: url("data:image/svg+xml,%3Csvg xmlns='http://www.w3.org/2000/svg' width='5' height='3'%3E%3Cpath d='M0 0h5L2.500 3z'/%3E%3C/svg%3E");
    font-size: 11px;
}

.map {
    flex: 1;
    min-height: 0;
    display: flex;
    overflow: hidden;
}

.scale {
    width: 86px;
    padding-left: 7px;
    list-style: none;
    border-right: 1px solid #000;
    background:
        repeating-linear-gradient(#000 0 1px, transparent 1px 100px) right 6px / 25px 300px no-repeat,
        repeating-linear-gradient(#000 0 1px, transparent 1px 10px) right 6px / 15px 300px no-repeat,
        #ffdab9;
    font-family: Verdana, "DejaVu Sans", sans-serif;
    font-size: 12px;
    font-weight: bold;
    line-height: 14px;
}

.scale li {
    height: 100px;
}

.spots {
    flex: 1;
    border-top: 1px solid #000;
    background: #fff;
}

.small {
    padding-right: 4px;
}

.small i {
    width: 86px;
}

.legend {
    display: flex;
    align-items: center;
    gap: 6px;
    height: 24px;
    padding-left: 6px;
    border-top: 1px solid #d5d5d5;
    font-family: "Segoe UI", "Open Sans", sans-serif;
    font-size: 12px;
}

.legend button {
    display: flex;
    align-items: center;
    gap: 6px;
}

.wkd { color: #f00; }
.bnd { color: #ff8c1a; }
.mde { color: #1e90ff; }

.resize {
    width: 11px;
    height: 11px;
    margin-left: auto;
    background: radial-gradient(#aaa 1px, transparent 1px) 0 0 / 4px 4px;
    clip-path: polygon(100% 0, 100% 100%, 0 100%);
}

/* Side */
.side {
    width: 28px;
    margin-top: 2px;
    display: flex;
    flex-direction: column;
    gap: 3px;
    background: #a9a9a9;
}

.side button {
    display: flex;
    align-items: center;
    justify-content: center;
    width: 26px;
    height: 28px;
    background: #c1ffc1;
}

.side .clear {
    margin-top: 17px;
    background: #f0e68c;
}

.side .last {
    margin-top: auto;
    margin-bottom: 1px;
}

/* Status bar */
.status {
    display: flex;
    align-items: center;
    gap: 1px;
    height: 26px;
    padding: 0 2px 2px 4px;
    border-top: 1px solid #d5d5d5;
    font-family: "Segoe UI", "Open Sans", sans-serif;
    font-size: 11px;
}

.status button {
    height: 19px;
    padding: 0 4px;
    border: 1px solid;
    border-color: #fff #999 #999 #fff;
}

.qso-count {
    margin-right: 6px;
}

.status .chat {
    background: #006400;
    color: #fff;
}

.led {
    margin-left: auto;
}

.status .resize {
    margin-left: 4px;
}
```
